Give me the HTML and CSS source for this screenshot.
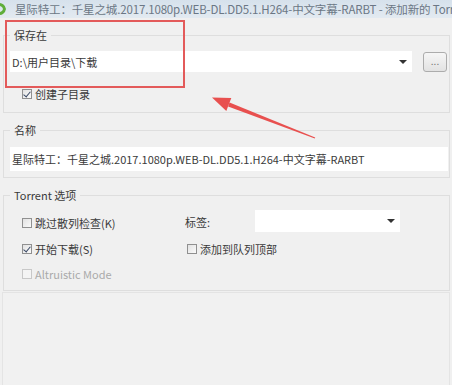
FILE: index.html
```html
<!DOCTYPE html>
<html lang="zh-CN">
<head>
    <meta charset="UTF-8">
    <title>添加新的 Torrent</title>
    <link rel="stylesheet" href="styles.css">
</head>
<body>
    <div class="window">
        <div class="titlebar">
            <svg class="app-icon" width="10" height="16" viewBox="0 0 10 16">
                <path d="M-2 2 A7 7 0 0 1 6 8 A7 7 0 0 1 -2 14 L-2 11 A4 4 0 0 0 3 8 A4 4 0 0 0 -2 5 Z" fill="#5fae3a"/>
            </svg>
            <span class="title">星际特工：千星之城.2017.1080p.WEB-DL.DD5.1.H264-中文字幕-RARBT - 添加新的 Torrent</span>
        </div>

        <fieldset class="group save-group">
            <legend>保存在</legend>
            <div class="path-row">
                <div class="combo path-combo">
                    <span>D:\用户目录\下载</span>
                    <span class="caret"></span>
                </div>
                <button class="browse">...</button>
            </div>
            <label class="check sub-check"><span class="box checked"></span>创建子目录</label>
        </fieldset>

        <fieldset class="group name-group">
            <legend>名称</legend>
            <div class="name-input">星际特工：千星之城.2017.1080p.WEB-DL.DD5.1.H264-中文字幕-RARBT</div>
        </fieldset>

        <fieldset class="group torrent-group">
            <legend>Torrent 选项</legend>
            <div class="options">
                <label class="check"><span class="box"></span>跳过散列检查(K)</label>
                <span class="tag-label">标签:</span>
                <div class="combo tag-combo"><span class="caret"></span></div>

                <label class="check"><span class="box checked"></span>开始下载(S)</label>
                <label class="check queue-check"><span class="box"></span>添加到队列顶部</label>

                <label class="check disabled"><span class="box"></span>Altruistic Mode</label>
            </div>
        </fieldset>

        <div class="bottom-panel"></div>

        <div class="highlight"></div>
        <svg class="pointer" width="452" height="385" viewBox="0 0 452 385">
            <polygon points="315.2,137.5 314.8,138.5 228.1,106.4 229.5,102.6" fill="#e8504f"/>
            <polygon points="212,97.5 231.3,98 226.3,111" fill="#e8504f"/>
        </svg>
    </div>
</body>
</html>
```

FILE: styles.css
```css
* {
    box-sizing: border-box;
}
body {
    margin: 0;
    background-color: #f0f0f0;
    font-family: "Noto Sans CJK SC", "Noto Sans", sans-serif;
    font-size: 11px;
    color: #3a3a3a;
}
.window {
    position: relative;
    width: 452px;
    height: 385px;
    overflow: hidden;
    background-color: #f0f0f0;
}
.titlebar {
    height: 18px;
    display: flex;
    align-items: center;
    background: linear-gradient(#d6e1ec, #e3eaf1);
    white-space: nowrap;
    overflow: hidden;
}
.app-icon {
    flex: none;
    margin-right: 5px;
}
.title {
    font-size: 11.5px;
    letter-spacing: -0.15px;
    color: #6b7785;
    line-height: 18px;
}
.group {
    margin: 9px 2px 0 3px;
    padding: 8px 1px 10px 6px;
    border: 1px solid #dedede;
    min-width: 0;
}
.group legend {
    padding: 0 4px;
    line-height: 16px;
    color: #3a3a3a;
}
.path-row {
    display: flex;
    align-items: center;
}
.combo {
    position: relative;
    background: #fff;
    height: 21px;
    display: flex;
    align-items: center;
    padding-left: 2px;
}
.path-combo {
    width: 402px;
}
.caret {
    position: absolute;
    right: 5px;
    top: 9px;
    border-left: 4px solid transparent;
    border-right: 4px solid transparent;
    border-top: 4px solid #333;
}
.browse {
    margin-left: 11px;
    width: 24px;
    height: 20px;
    padding: 0 0 4px;
    border: 1px solid #acacac;
    border-radius: 3px;
    background: linear-gradient(#f6f6f6, #e2e2e2);
    color: #777;
    font-size: 10px;
    font-family: inherit;
}
.check {
    display: flex;
    align-items: center;
    height: 16px;
    white-space: nowrap;
}
.box {
    width: 10px;
    height: 10px;
    margin-right: 3px;
    border: 1px solid #909090;
    background: linear-gradient(135deg, #e2e2e2, #fafafa);
    position: relative;
    flex: none;
}
.box.checked::after {
    content: "";
    position: absolute;
    left: 2px;
    top: 0;
    width: 3px;
    height: 6px;
    border-right: 1.5px solid #3a4a66;
    border-bottom: 1.5px solid #3a4a66;
    transform: rotate(40deg);
}
.sub-check {
    margin: 14px 0 0 12px;
}
.name-group {
    padding-top: 9px;
    padding-bottom: 6px;
}
.name-input {
    background: #fff;
    height: 24px;
    line-height: 24px;
    padding-left: 2px;
    white-space: nowrap;
    overflow: hidden;
}
.torrent-group {
    padding-top: 7px;
    padding-bottom: 8px;
}
.options {
    display: grid;
    grid-template-columns: 163px 70px 145px;
    grid-template-rows: 22px 16px 16px;
    row-gap: 9px;
    align-items: center;
    margin-left: 12px;
}
.options .check:first-child {
    margin-top: 3px;
}
.tag-label {
    margin-top: 1px;
}
.tag-combo {
    height: 22px;
}
.queue-check {
    grid-column: 2 / 4;
    margin-left: 2px;
}
.check.disabled {
    color: #aaa;
}
.check.disabled .box {
    border-color: #c8c8c8;
    background: #f4f4f4;
}
.bottom-panel {
    margin: 1px 2px 0 2px;
    height: 95px;
    border: 1px solid #e4e4e4;
    background-color: #f1f1f1;
}
.highlight {
    position: absolute;
    left: 5px;
    top: 20px;
    width: 180px;
    height: 68px;
    border: 2px solid #e35a5a;
}
.pointer {
    position: absolute;
    left: 0;
    top: 0;
    pointer-events: none;
}
```
